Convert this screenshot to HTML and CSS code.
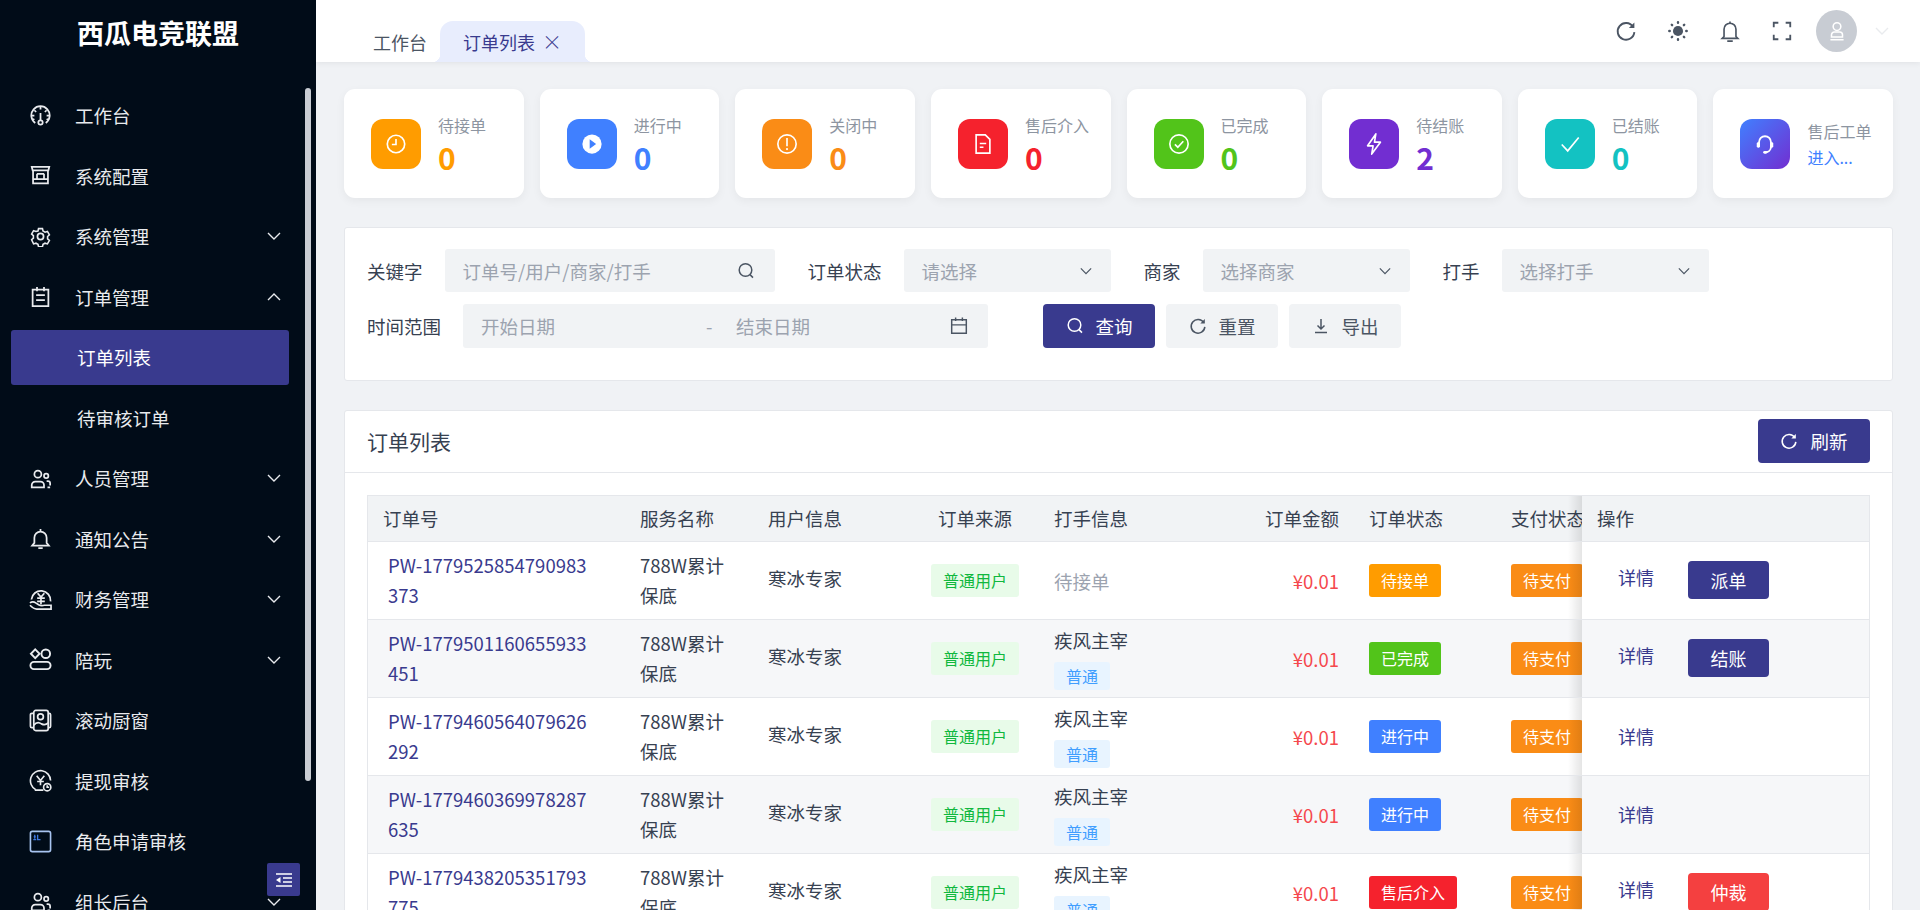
FILE: index.html
```html
<!DOCTYPE html>
<html lang="zh-CN">
<head>
<meta charset="utf-8">
<title>西瓜电竞联盟</title>
<link rel="stylesheet" href="styles.css">
</head>
<body>
<svg class="defs" width="0" height="0">
  <symbol id="i-chev" viewBox="0 0 14 8"><path d="M1 1l6 6 6-6" fill="none" stroke="currentColor" stroke-width="1.4"/></symbol>
  <symbol id="i-search" viewBox="0 0 18 18"><circle cx="8.5" cy="8" r="6.3" fill="none" stroke="currentColor" stroke-width="1.5"/><path d="M13 12.6l3 3" stroke="currentColor" stroke-width="1.5" fill="none"/></symbol>
  <symbol id="i-refresh" viewBox="0 0 20 20"><path d="M16.4 6.2A7.6 7.6 0 1 0 17.6 11" fill="none" stroke="currentColor" stroke-width="1.7"/><path d="M17.6 2.2v5h-5z" fill="currentColor"/></symbol>
  <symbol id="i-users" viewBox="0 0 24 24"><g fill="none" stroke="currentColor" stroke-width="2"><circle cx="9" cy="7" r="4"/><path d="M2 22v-2.500a4 4 0 0 1 4-4h6a4 4 0 0 1 4 4V22z"/><circle cx="18.500" cy="9" r="2.500"/><path d="M19 15h1.500a2.500 2.500 0 0 1 2.500 2.500V20M20 22h3"/></g></symbol>
  <symbol id="i-user" viewBox="0 0 20 20"><g fill="none" stroke="currentColor" stroke-width="1.400"><circle cx="10" cy="6" r="3.500"/><path d="M5 15.500v-2a2.500 2.500 0 0 1 2.500-2.500h5a2.500 2.500 0 0 1 2.500 2.500v2zM4 18h12"/></g></symbol>
</svg>

<div class="app">
  <aside class="side">
    <div class="logo">西瓜电竞联盟</div>
    <nav class="menu">
      <a class="mi"><svg class="mi-ic" viewBox="0 0 24 24"><g fill="none" stroke="currentColor" stroke-width="2"><path d="M6 20.500A10.500 10.500 0 1 1 18 20.500"/><circle cx="12" cy="20" r="2.500"/><path d="M12 17V9M12 2v3M5 6l2 2M19 6l-2 2M2 12h3M19 12h3M3 17l2-1M21 17l-2-1"/></g></svg><span>工作台</span></a>
      <a class="mi"><svg class="mi-ic" viewBox="0 0 24 24"><g fill="none" stroke="currentColor" stroke-width="2"><path d="M2 2h20l-1 4H3zM3.500 6v15h17V6M2.500 21h19M8 10h8M8 10v6M16 10v6M3.500 16h17"/></g></svg><span>系统配置</span></a>
      <a class="mi"><svg class="mi-ic" viewBox="0 0 24 24"><g fill="none" stroke="currentColor" stroke-width="2"><circle cx="12" cy="12" r="3.500"/><path d="M9.500 2h5l.7 3 2.600 1.500 3-.9 2.500 4.300-2.300 2.100v3l2.300 2.100-2.500 4.300-3-.9-2.600 1.500-.7 3h-5l-.7-3-2.600-1.500-3 .9L.7 16.100 3 14v-3L.7 8.900l2.500-4.300 3 .9L8.800 5z" transform="translate(1.200 1.200) scale(.9)"/></g></svg><span>系统管理</span><svg class="chev"><use href="#i-chev"/></svg></a>
      <a class="mi"><svg class="mi-ic" viewBox="0 0 24 24"><g fill="none" stroke="currentColor" stroke-width="2"><path d="M3 4h18v19H3zM8 1v5M16 1v5M7 10.500h10M7 16h10"/></g></svg><span>订单管理</span><svg class="chev up"><use href="#i-chev"/></svg></a>
      <a class="mi sub active"><span>订单列表</span></a>
      <a class="mi sub"><span>待审核订单</span></a>
      <a class="mi"><svg class="mi-ic"><use href="#i-users"/></svg><span>人员管理</span><svg class="chev"><use href="#i-chev"/></svg></a>
      <a class="mi"><svg class="mi-ic" viewBox="0 0 24 24"><g fill="none" stroke="currentColor" stroke-width="2"><path d="M12 4a7 7 0 0 0-7 7v6l-2.500 3h19L19 17v-6a7 7 0 0 0-7-7zM12 1v3M9.500 23h5"/></g></svg><span>通知公告</span><svg class="chev"><use href="#i-chev"/></svg></a>
      <a class="mi"><svg class="mi-ic lg" viewBox="0 0 24 24"><g fill="none" stroke="currentColor" stroke-width="1.800"><path d="M2.500 12a10 10 0 1 1 20 2"/><path d="M9 5.500l3.500 4 3.500-4M8.500 10.500h8M8.500 14h8M12.500 10v7"/><path d="M1 15.500c2-1.500 4-1.500 6 0l3 2c2 1 4 1 6 .5h7v4H8c-3 0-5-2-7-4"/></g></svg><span>财务管理</span><svg class="chev"><use href="#i-chev"/></svg></a>
      <a class="mi"><svg class="mi-ic lg" viewBox="0 0 24 24"><g fill="none" stroke="currentColor" stroke-width="2"><path d="M6.500 1.500l4.500 4.500-4.500 4.500L2 6z"/><circle cx="17.500" cy="6" r="4.500"/><rect x="1.500" y="14.500" width="21" height="7.500" rx="3.700"/></g></svg><span>陪玩</span><svg class="chev"><use href="#i-chev"/></svg></a>
      <a class="mi"><svg class="mi-ic lg" viewBox="0 0 24 24"><g fill="none" stroke="currentColor" stroke-width="1.800"><rect x="5" y="1.500" width="15" height="21" rx="2"/><path d="M5 4.500H3a1.500 1.500 0 0 0-1.500 1.500v12A1.500 1.500 0 0 0 3 19.500h2M20 4.500h1a1.500 1.500 0 0 1 1.500 1.500v12a1.500 1.500 0 0 1-1.500 1.500h-1"/><circle cx="12" cy="8" r="3"/><path d="M5 17c3-4 6-3 8-1.500 2 1 5 1 7-1"/></g></svg><span>滚动厨窗</span></a>
      <a class="mi"><svg class="mi-ic lg" viewBox="0 0 24 24"><g fill="none" stroke="currentColor" stroke-width="1.700"><path d="M7 21.500A10.500 10.500 0 1 1 22.500 12"/><path d="M8 7l4 5 4-5M12 12v5M8.500 13h7"/><circle cx="19" cy="19" r="3.800"/><path d="M19 17v2h2M6 22h9"/></g></svg><span>提现审核</span></a>
      <a class="mi"><svg class="mi-ic lg role" viewBox="0 0 24 24"><rect x="1.500" y="1.500" width="21" height="21" rx="2" fill="none" stroke="#a8c4f0" stroke-width="1.700"/><path d="M6 5v4M5 7h2M9 5v5h3M4.500 10h3" stroke="#3f78e0" stroke-width="1.400" fill="none"/></svg><span>角色申请审核</span></a>
      <a class="mi"><svg class="mi-ic"><use href="#i-users"/></svg><span>组长后台</span><svg class="chev"><use href="#i-chev"/></svg></a>
    </nav>
    <div class="thumb"></div>
    <button class="collapse"><svg viewBox="0 0 16 14" width="16" height="14"><path d="M0 1h16M7 5h9M7 9h9M0 13h16" stroke="#fff" stroke-width="1.600"/><path d="M4.500 4v6L0 7z" fill="#fff"/></svg></button>
  </aside>

  <main class="main">
    <header class="top">
      <div class="tabs">
        <a class="tab">工作台</a>
        <a class="tab on">订单列表<span class="x">×</span></a>
      </div>
      <div class="tools">
        <svg class="tool"><use href="#i-refresh"/></svg>
        <svg class="tool" viewBox="0 0 24 24"><circle cx="12" cy="12" r="5.500" fill="currentColor"/><g fill="none" stroke="currentColor" stroke-width="2.600" stroke-linecap="round"><path d="M12 2.500v.5M12 21v.5M2.500 12H3M21 12h.5M5.200 5.200l.4.4M18.400 18.400l.4.4M5.200 18.800l.4-.4M18.400 5.600l.4-.4"/></g></svg>
        <svg class="tool" viewBox="0 0 24 24"><g fill="none" stroke="currentColor" stroke-width="1.800"><path d="M12 3.500a6.500 6.500 0 0 0-6.500 6.500v8L3.500 20h17l-2-2v-8A6.500 6.500 0 0 0 12 3.500zM12 1.500v2M9 23h6"/></g></svg>
        <svg class="tool" viewBox="0 0 24 24"><path d="M3 8V3h5M16 3h5v5M21 16v5h-5M8 21H3v-5" fill="none" stroke="currentColor" stroke-width="2"/></svg>
        <span class="avatar"><svg width="22" height="22"><use href="#i-user"/></svg></span>
        <svg class="chev top-chev"><use href="#i-chev"/></svg>
      </div>
    </header>

    <div class="content">
      <section class="cards">
        <div class="card"><span class="ci orange"><svg viewBox="0 0 24 24"><circle cx="12" cy="12" r="9.500" fill="none" stroke="#fff" stroke-width="1.800"/><path d="M12 6.500V12.500H7.500" fill="none" stroke="#fff" stroke-width="1.800"/></svg></span><div><p class="cl">待接单</p><p class="cv t-orange">0</p></div></div>
        <div class="card"><span class="ci blue"><svg viewBox="0 0 24 24"><circle cx="12" cy="12" r="10.500" fill="#fff"/><path d="M9.500 6.800l7 5.200-7 5.200z" fill="#4080ff"/></svg></span><div><p class="cl">进行中</p><p class="cv t-blue">0</p></div></div>
        <div class="card"><span class="ci amber"><svg viewBox="0 0 24 24"><circle cx="12" cy="12" r="10" fill="none" stroke="#fff" stroke-width="1.800"/><path d="M12 5.500v9" stroke="#fff" stroke-width="1.800"/><circle cx="12" cy="17.500" r="1.200" fill="#fff"/></svg></span><div><p class="cl">关闭中</p><p class="cv t-amber">0</p></div></div>
        <div class="card"><span class="ci red"><svg viewBox="0 0 24 24"><path d="M4.500 2h10l5 5v15h-15z" fill="none" stroke="#fff" stroke-width="1.800"/><path d="M8.500 11.500h7M8.500 15.500h4" stroke="#fff" stroke-width="1.800"/></svg></span><div><p class="cl">售后介入</p><p class="cv t-red">0</p></div></div>
        <div class="card"><span class="ci green"><svg viewBox="0 0 24 24"><circle cx="12" cy="12" r="10" fill="none" stroke="#fff" stroke-width="1.800"/><path d="M7.500 12.500l3.200 3 6-6.500" fill="none" stroke="#fff" stroke-width="1.800"/></svg></span><div><p class="cl">已完成</p><p class="cv t-green">0</p></div></div>
        <div class="card"><span class="ci purple"><svg viewBox="0 0 24 24"><path d="M14 1L5 14h6l-1.500 9L19 10h-6.500z" fill="none" stroke="#fff" stroke-width="1.800" stroke-linejoin="round"/></svg></span><div><p class="cl">待结账</p><p class="cv t-purple">2</p></div></div>
        <div class="card"><span class="ci cyan"><svg viewBox="0 0 24 24"><path d="M3 12.500l6.500 7L21.500 5" fill="none" stroke="#fff" stroke-width="1.800"/></svg></span><div><p class="cl">已结账</p><p class="cv t-cyan">0</p></div></div>
        <div class="card"><span class="ci grad"><svg viewBox="0 0 24 24"><g fill="none" stroke="#fff" stroke-width="2"><path d="M5.500 15V10a6.500 6.500 0 0 1 13 0v5c0 4-3 6-6 6"/></g><rect x="3" y="10" width="3.500" height="6" rx="1.500" fill="#fff"/><rect x="17.500" y="10" width="3.500" height="6" rx="1.500" fill="#fff"/><rect x="10" y="19.500" width="4.500" height="3" rx="1.500" fill="#fff"/></svg></span><div class="cw"><p class="cl">售后工单</p><p class="clink">进入...</p></div></div>
      </section>

      <section class="panel filter">
        <div class="frow">
          <label class="fl">关键字</label>
          <div class="field f-key"><span>订单号/用户/商家/打手</span><svg class="fi"><use href="#i-search"/></svg></div>
          <label class="fl l2">订单状态</label>
          <div class="field f-sel"><span>请选择</span><svg class="fc"><use href="#i-chev"/></svg></div>
          <label class="fl l2">商家</label>
          <div class="field f-sel"><span>选择商家</span><svg class="fc"><use href="#i-chev"/></svg></div>
          <label class="fl l2">打手</label>
          <div class="field f-sel"><span>选择打手</span><svg class="fc"><use href="#i-chev"/></svg></div>
        </div>
        <div class="frow">
          <label class="fl">时间范围</label>
          <div class="field f-date">
            <span class="ds">开始日期</span><span class="dd">-</span><span class="de">结束日期</span>
            <svg class="fi cal" viewBox="0 0 16 16"><path d="M1.500 2.500h13v12h-13zM1.500 7h13M5 .5v3M11 .5v3" fill="none" stroke="currentColor" stroke-width="1.300"/></svg>
          </div>
          <div class="btns">
            <button class="btn pri"><svg><use href="#i-search"/></svg>查询</button>
            <button class="btn gry"><svg><use href="#i-refresh"/></svg>重置</button>
            <button class="btn gry"><svg viewBox="0 0 18 18"><path d="M9 2v9.500M5.500 8.500L9 12l3.500-3.500M3 15.500h12" fill="none" stroke="currentColor" stroke-width="1.500"/></svg>导出</button>
          </div>
        </div>
      </section>

      <section class="panel list">
        <div class="list-h">
          <h2>订单列表</h2>
          <button class="btn pri"><svg><use href="#i-refresh"/></svg>刷新</button>
        </div>
        <div class="tw">
          <table>
            <colgroup><col class="c1"><col class="c2"><col class="c3"><col class="c4"><col class="c5"><col class="c6"><col class="c7"><col class="c8"><col class="c9"></colgroup>
            <thead>
              <tr><th>订单号</th><th>服务名称</th><th>用户信息</th><th class="ctr">订单来源</th><th>打手信息</th><th class="rgt">订单金额</th><th>订单状态</th><th>支付状态</th><th class="fx">操作</th></tr>
            </thead>
            <tbody>
              <tr>
                <td><a class="oid">PW-1779525854790983<br>373</a></td><td>788W累计<br>保底</td><td class="usr">寒冰专家</td><td class="ctr"><span class="tag src">普通用户</span></td>
                <td class="wait">待接单</td><td class="rgt amt">¥0.01</td><td><span class="tag st orange">待接单</span></td><td class="pay"><span class="tag st amber">待支付</span></td>
                <td class="fx"><a class="det">详情</a><button class="act pri">派单</button></td>
              </tr>
              <tr>
                <td><a class="oid">PW-1779501160655933<br>451</a></td><td>788W累计<br>保底</td><td class="usr">寒冰专家</td><td class="ctr"><span class="tag src">普通用户</span></td>
                <td><div class="pl">疾风主宰</div><span class="tag lvl">普通</span></td><td class="rgt amt">¥0.01</td><td><span class="tag st green">已完成</span></td><td class="pay"><span class="tag st amber">待支付</span></td>
                <td class="fx"><a class="det">详情</a><button class="act pri">结账</button></td>
              </tr>
              <tr>
                <td><a class="oid">PW-1779460564079626<br>292</a></td><td>788W累计<br>保底</td><td class="usr">寒冰专家</td><td class="ctr"><span class="tag src">普通用户</span></td>
                <td><div class="pl">疾风主宰</div><span class="tag lvl">普通</span></td><td class="rgt amt">¥0.01</td><td><span class="tag st blue">进行中</span></td><td class="pay"><span class="tag st amber">待支付</span></td>
                <td class="fx"><a class="det">详情</a></td>
              </tr>
              <tr>
                <td><a class="oid">PW-1779460369978287<br>635</a></td><td>788W累计<br>保底</td><td class="usr">寒冰专家</td><td class="ctr"><span class="tag src">普通用户</span></td>
                <td><div class="pl">疾风主宰</div><span class="tag lvl">普通</span></td><td class="rgt amt">¥0.01</td><td><span class="tag st blue">进行中</span></td><td class="pay"><span class="tag st amber">待支付</span></td>
                <td class="fx"><a class="det">详情</a></td>
              </tr>
              <tr>
                <td><a class="oid">PW-1779438205351793<br>775</a></td><td>788W累计<br>保底</td><td class="usr">寒冰专家</td><td class="ctr"><span class="tag src">普通用户</span></td>
                <td><div class="pl">疾风主宰</div><span class="tag lvl">普通</span></td><td class="rgt amt">¥0.01</td><td><span class="tag st red">售后介入</span></td><td class="pay"><span class="tag st amber">待支付</span></td>
                <td class="fx"><a class="det">详情</a><button class="act dng">仲裁</button></td>
              </tr>
            </tbody>
          </table>
        </div>
      </section>
    </div>
  </main>
</div>
</body>
</html>
```
FILE: styles.css
```css
* { box-sizing: border-box; }
html, body { margin: 0; height: 100%; overflow: hidden; }
body { font-family: "Noto Sans CJK SC", "Noto Sans", sans-serif; font-size: 18.5px; color: #374151; background: #f0f2f5; }
p, h2 { margin: 0; }
.defs { position: absolute; }
.app { display: flex; height: 910px; overflow: hidden; }

/* sidebar */
.side { position: relative; flex: 0 0 316px; background: #010c18; color: #e9ebee; overflow: hidden; }
.logo { height: 62px; padding-top: 2px; display: flex; align-items: center; justify-content: center; padding-right: 0; font-size: 27px; font-weight: 700; color: #fff; }
.menu { display: flex; flex-direction: column; gap: 5.5px; padding: 25.5px 27px 0 11px; }
.mi { display: flex; align-items: center; flex: 0 0 55px; height: 55px; padding-left: 19px; padding-right: 8px; border-radius: 3px; }
.mi-ic { flex: 0 0 21px; width: 21px; height: 21px; margin-right: 24px; }
.mi-ic.lg { flex-basis: 23px; width: 23px; height: 23px; margin-left: -1px; margin-right: 23px; }
.chev { width: 14px; height: 8px; margin-left: auto; color: #e9ebee; }
.chev.up { transform: rotate(180deg); }
.mi.sub { padding-left: 66px; }
.mi.active { background: #393a8e; color: #fff; }
.thumb { position: absolute; left: 305px; top: 88px; width: 6px; height: 693px; border-radius: 3px; background: #c9cdd3; }
.collapse { position: absolute; left: 267px; top: 863px; width: 33px; height: 33px; border: 0; border-radius: 2px; background: #393a8e; display: flex; align-items: center; justify-content: center; padding: 0; }

/* main */
.main { flex: 1; min-width: 0; }
.top { height: 62px; background: #fff; box-shadow: 0 1px 6px rgba(0, 0, 0, .07); display: flex; align-items: flex-end; justify-content: space-between; position: relative; z-index: 2; }
.tabs { display: flex; height: 41px; margin-left: 57px; align-items: stretch; }
.tab { display: flex; align-items: center; font-size: 18px; color: #4b5563; }
.tab.on { position: relative; margin-left: 13px; padding: 0 23px; background: #e8edfd; color: #393a8e; border-radius: 13px 13px 0 0; }
.tab.on::before, .tab.on::after { content: ""; position: absolute; bottom: 0; width: 8px; height: 8px; }
.tab.on::before { left: -8px; background: radial-gradient(circle at 0 0, transparent 8px, #e8edfd 8.5px); }
.tab.on::after { right: -8px; background: radial-gradient(circle at 100% 0, transparent 8px, #e8edfd 8.5px); }
.x { margin-left: 7px; font-size: 20px; line-height: 1; font-weight: 300; }
.tools { display: flex; align-items: center; height: 62px; padding-right: 31px; color: #4b5563; }
.tool { width: 22px; height: 22px; margin-right: 30px; }
.avatar { width: 41px; height: 42px; margin-left: -7px; border-radius: 50%; background: #c8ccd3; color: #fff; display: flex; align-items: center; justify-content: center; }
.top-chev { margin-left: 18px; }

.content { padding: 27px 27px 0 28px; }
.cards { display: grid; grid-template-columns: repeat(8, 1fr); gap: 16px; }
.card { height: 109px; background: #fff; border-radius: 11px; box-shadow: 0 3px 10px rgba(0, 0, 0, .05); display: flex; align-items: center; padding-left: 27px; gap: 17px; }
.ci { flex: 0 0 50px; height: 50px; border-radius: 12px; display: flex; align-items: center; justify-content: center; }
.ci svg { width: 22px; height: 22px; }
.cl { font-size: 16px; line-height: 24px; color: #8d95a1; white-space: nowrap; }
.cv { font-size: 30px; line-height: 36px; font-weight: 600; margin-top: 2px; }
.clink { font-size: 16px; line-height: 24px; color: #4080ff; margin-top: 2px; }
.orange { background: #ff9c00; } .t-orange { color: #ff9c00; }
.blue { background: #4080ff; } .t-blue { color: #4080ff; }
.amber { background: #fa8c16; } .t-amber { color: #fa8c16; }
.red { background: #f5222d; } .t-red { color: #f5222d; }
.green { background: #52c41a; } .t-green { color: #52c41a; }
.purple { background: #722ed1; } .t-purple { color: #722ed1; }
.cyan { background: #13c2c2; } .t-cyan { color: #13c2c2; }
.grad { background: linear-gradient(135deg, #4080ff, #722ed1); }

.panel { background: #fff; border: 1px solid #e5e7eb; border-radius: 3px; }
.filter { margin-top: 29px; height: 154px; padding: 21px 0 0 22px; display: flex; flex-direction: column; gap: 12px; }
.frow { display: flex; align-items: center; }
.fl { font-size: 18.5px; color: #374151; margin-right: 22px; white-space: nowrap; }
.l2 { margin-left: 33px; }
.field { position: relative; height: 43px; background: #f1f3f5; border-radius: 3px; display: flex; align-items: center; color: #9ca3af; padding-left: 18px; font-size: 18.5px; }
.f-key { width: 330px; }
.f-sel { width: 207px; }
.f-date { width: 525px; height: 44px; }
.fi { position: absolute; right: 20px; width: 18px; height: 18px; color: #4b5563; }
.fc { position: absolute; right: 19px; width: 12px; height: 8px; color: #4b5563; }
.ds { width: 225px; } .dd { width: 30px; } 
.btns { display: flex; gap: 11px; margin-left: 55px; }
.btn { height: 44px; width: 112px; border: 0; border-radius: 4px; display: flex; align-items: center; justify-content: center; gap: 12px; font: inherit; padding: 0; }
.btn svg { width: 18px; height: 18px; }
.pri { background: #393a8e; color: #fff; }
.gry { background: #f1f3f5; color: #4b5563; }

.list { margin-top: 29px; height: 600px; }
.list-h { height: 62px; padding: 8px 22px 0 22px; border-bottom: 1px solid #e5e7eb; display: flex; align-items: flex-start; justify-content: space-between; }
.list-h h2 { font-size: 21px; font-weight: 400; color: #374151; line-height: 44px; }
.tw { margin: 22px 22px 0 22px; border: 1px solid #e5e7eb; border-bottom: 0; overflow: hidden; }
table { width: 100%; table-layout: fixed; border-collapse: collapse; }
.c1 { width: 257px; } .c2 { width: 128px; } .c3 { width: 158px; } .c4 { width: 128px; }
.c5 { width: 161px; } .c6 { width: 154px; } .c7 { width: 142px; } .c8 { width: 86px; } .c9 { width: auto; }
th, td { padding: 0 15px; text-align: left; font-weight: 400; color: #374151; border-bottom: 1px solid #e5e7eb; white-space: nowrap; }
th { height: 45px; background: #f1f3f5; overflow: hidden; }
td { height: 78px; line-height: 30px; }
tbody tr:nth-child(even) td { background: #f6f7f9; }
.ctr { text-align: center; }
.rgt { text-align: right; }
.oid { display: block; padding-left: 5px; color: #393a8e; }
.usr { padding-bottom: 5px; }
.tag { display: inline-block; height: 33px; line-height: 33px; border-radius: 3px; font-size: 16px; vertical-align: middle; }
.src { padding: 0 12px; background: #e8fbe9; color: #10b83e; }
.st { padding: 0 12px; color: #fff; }
.lvl { height: 28px; line-height: 28px; padding: 0 12px; background: #e8f4ff; color: #409eff; }
.pl { line-height: 28px; margin-bottom: 4px; }
.wait { color: #9ca3af; padding-top: 2px; }
.amt { color: #f5484d; padding-top: 2px; }
.pay { padding-right: 0; overflow: hidden; }
.fx { position: relative; padding-left: 15px; overflow: visible; }
.fx::before { content: ""; position: absolute; left: -14px; top: 0; bottom: 0; width: 14px; background: linear-gradient(to left, rgba(0, 0, 0, .1), rgba(0, 0, 0, 0)); }
.det { display: inline-block; margin-left: 21px; width: 70px; color: #393a8e; font-size: 18px; }
.act { width: 81px; height: 38px; border: 0; border-radius: 4px; font: inherit; font-size: 18px; vertical-align: middle; padding: 0; }
.dng { background: #f44040; color: #fff; }
```
